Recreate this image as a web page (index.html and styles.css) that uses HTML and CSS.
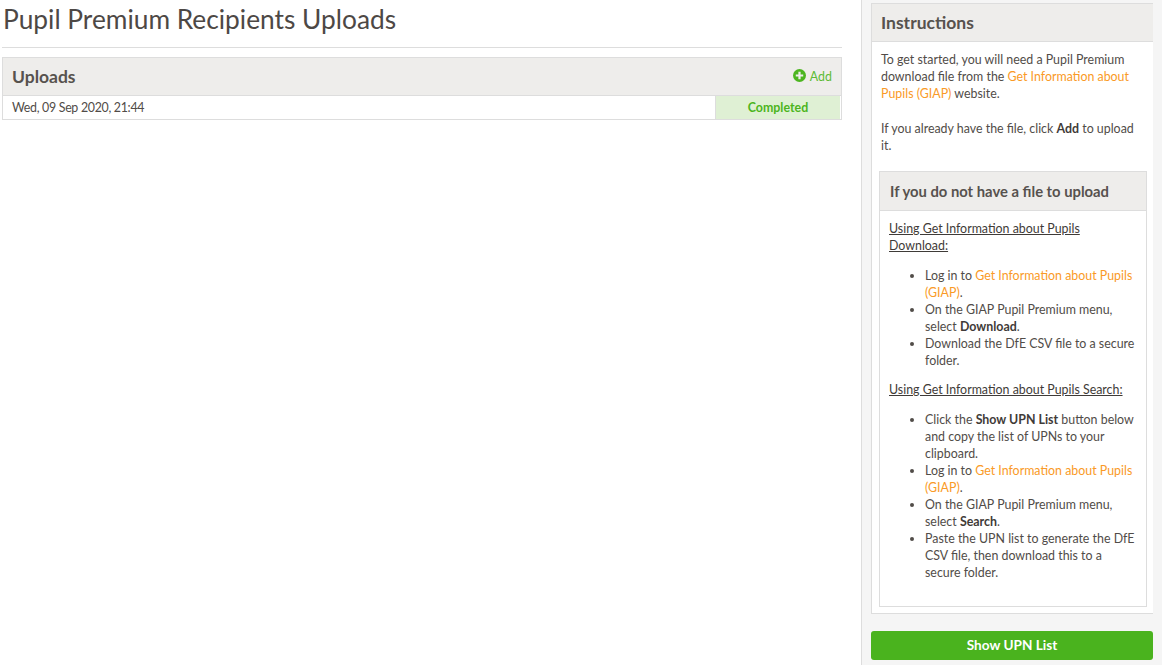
FILE: index.html
```html
<!DOCTYPE html>
<html lang="en">
<head>
<meta charset="utf-8">
<title>Pupil Premium Recipients Uploads</title>
<link rel="stylesheet" href="styles.css">
</head>
<body>
<div class="page">
  <main class="main">
    <h1 class="title">Pupil Premium Recipients Uploads</h1>
    <section class="panel uploads">
      <div class="panel-head uploads-head">
        <h2>Uploads</h2>
        <a class="add" href="#">
          <svg class="add-icon" viewBox="0 0 14 14" aria-hidden="true"><circle cx="7" cy="7" r="7" fill="#4cb520"/><path d="M7 3v8M3 7h8" stroke="#eeedeb" stroke-width="2.4"/></svg>
          Add
        </a>
      </div>
      <div class="row">
        <div class="row-date">Wed, 09 Sep 2020, 21:44</div>
        <div class="row-status">Completed</div>
      </div>
    </section>
  </main>
  <aside class="side">
    <section class="panel instructions">
      <div class="panel-head"><h2>Instructions</h2></div>
      <div class="instructions-body">
        <p>To get started, you will need a Pupil Premium download file from the <a href="#">Get Information about Pupils (GIAP)</a> website.</p>
        <p>If you already have the file, click <b>Add</b> to upload it.</p>
        <section class="panel nested">
          <div class="panel-head"><h3>If you do not have a file to upload</h3></div>
          <div class="nested-body">
            <p class="sub"><u>Using Get Information about Pupils Download:</u></p>
            <ul>
              <li>Log in to <a href="#">Get Information about Pupils (GIAP)</a>.</li>
              <li>On the GIAP Pupil Premium menu, select <b>Download</b>.</li>
              <li>Download the DfE CSV file to a secure folder.</li>
            </ul>
            <p class="sub"><u>Using Get Information about Pupils Search:</u></p>
            <ul>
              <li>Click the <b>Show UPN List</b> button below and copy the list of UPNs to your clipboard.</li>
              <li>Log in to <a href="#">Get Information about Pupils (GIAP)</a>.</li>
              <li>On the GIAP Pupil Premium menu, select <b>Search</b>.</li>
              <li>Paste the UPN list to generate the DfE CSV file, then download this to a secure folder.</li>
            </ul>
          </div>
        </section>
      </div>
    </section>
    <button class="show-btn" type="button">Show UPN List</button>
  </aside>
</div>
</body>
</html>
```

FILE: styles.css
```css
* { box-sizing: border-box; }
html, body { margin: 0; height: 100%; overflow: hidden; background: #fff; }
body { font-family: Lato, "Noto Sans", sans-serif; font-size: 12.4px; line-height: 17px; color: #514c48; }
a { color: #fa9a26; text-decoration: none; }
b { font-weight: 700; color: #3f3b38; }
u { color: #3f3b38; }
h1, h2, h3, p, ul { margin: 0; }

.page { display: flex; height: 665px; }

.main { width: 861px; padding: 0 19px 0 2px; }
.title { font-size: 26.3px; line-height: 34px; font-weight: 400; padding: 2px 0 11px 1px; border-bottom: 1px solid #ddd; margin-bottom: 9px; color: #4d4845; }

.panel { border: 1px solid #ddd; background: #fff; }
.panel-head { background: #eeedeb; border-bottom: 1px solid #ddd; padding: 0 9px; height: 38px; display: flex; align-items: center; justify-content: space-between; }
.panel-head h2 { font-size: 17.5px; font-weight: 700; color: #57524e; }
.panel-head h3 { font-size: 14.8px; font-weight: 700; color: #57524e; padding-left: 1px; }

.add { display: flex; align-items: center; gap: 4px; color: #5dbb35; }
.add-icon { width: 13px; height: 13px; margin-top: -2px; }

.row { display: flex; height: 23px; }
.row-date { flex: 1; padding: 3px 9px; letter-spacing: -0.3px; }
.row-status { width: 125px; margin-right: 1px; background: #dff0d4; border-left: 1px solid #ddd; color: #4cb520; font-weight: 700; text-align: center; line-height: 23px; }

.side { width: 301px; border-left: 1px solid #ddd; background: #f5f5f5; padding: 3px 9px 0 9px; display: flex; flex-direction: column; }
.instructions { height: 611px; border-right: 0; }
.instructions-body { padding: 9px 7px 0 9px; }
.instructions-body > p { margin-bottom: 18px; }
.instructions-body > p + p { margin-bottom: 17px; }
.nested { height: 436px; margin: 0 -1px 0 -2px; }
.nested > .panel-head { height: 39px; }
.nested-body { padding: 9px 7px 0 9px; }
.nested-body .sub { margin-bottom: 13px; }
.nested-body ul { padding-left: 36px; margin-bottom: 12px; }
.show-btn { margin-top: 17px; height: 29px; width: 282px; padding: 0 0 1px; background: #4ab31e; color: #fff; border: 0; border-radius: 3px; font: 700 13.6px/26px Lato, "Noto Sans", sans-serif; }
```
